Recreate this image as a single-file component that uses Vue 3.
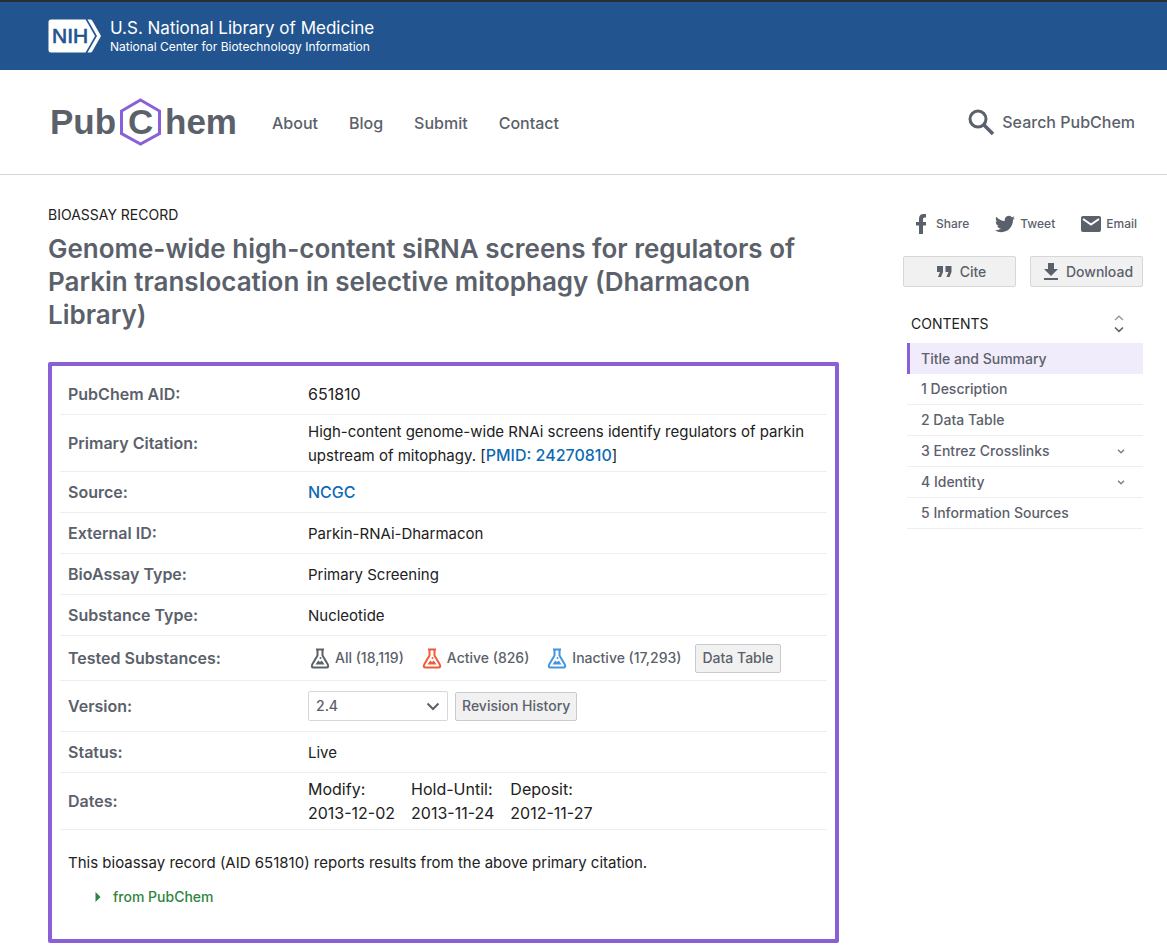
<script setup>
import { ref } from 'vue'

const navLinks = ['About', 'Blog', 'Submit', 'Contact']
const version = ref('2.4')
const topRows = [
  { label: 'External ID:', value: 'Parkin-RNAi-Dharmacon' },
  { label: 'BioAssay Type:', value: 'Primary Screening' },
  { label: 'Substance Type:', value: 'Nucleotide' },
]
const substances = [
  { text: 'All (18,119)', tone: 'all' },
  { text: 'Active (826)', tone: 'active' },
  { text: 'Inactive (17,293)', tone: 'inactive' },
]
const dates = [
  { label: 'Modify:', value: '2013-12-02' },
  { label: 'Hold-Until:', value: '2013-11-24' },
  { label: 'Deposit:', value: '2012-11-27' },
]
const contents = [
  { text: 'Title and Summary', current: true },
  { text: '1 Description' },
  { text: '2 Data Table' },
  { text: '3 Entrez Crosslinks', expandable: true },
  { text: '4 Identity', expandable: true },
  { text: '5 Information Sources' },
]
</script>

<template>
  <div class="page">
    <div class="agency">
      <a href="#" class="agency-link">
        <svg class="nih" width="54" height="34" viewBox="0 0 54 34" aria-hidden="true">
          <path d="M3 .5H37.600L47 17 37.600 33.500H3Q.5 33.500 .5 31V3Q.5 .5 3 .5Z" fill="#fff" />
          <path d="M39.500 .5H42.500Q43.500 .5 44.200 1.600L53 17 44.200 32.400Q43.500 33.500 42.500 33.500H39.500L49 17Z" fill="#fff" />
          <text x="4" y="24" class="nih-text">NIH</text>
        </svg>
        <span class="agency-names">
          <span class="agency-main">U.S. National Library of Medicine</span>
          <span class="agency-sub">National Center for Biotechnology Information</span>
        </span>
      </a>
    </div>

    <header class="header">
      <a href="#" class="logo" aria-label="PubChem">
        <svg width="188" height="48" viewBox="0 0 188 48">
          <text x="1" y="36" class="logo-text">Pub</text>
          <text x="79" y="36" class="logo-text">C</text>
          <text x="116" y="36" class="logo-text">hem</text>
          <path d="M91.500 2 110.500 13V35.500L91.500 46 72.500 35.500V13Z" fill="none" stroke="#8b60d6" stroke-width="3" />
        </svg>
      </a>
      <nav class="nav">
        <a v-for="l in navLinks" :key="l" href="#">{{ l }}</a>
      </nav>
      <a href="#" class="search">
        <svg width="27" height="27" viewBox="0 0 27 27" aria-hidden="true">
          <circle cx="10" cy="10" r="8" fill="none" stroke="currentColor" stroke-width="3" />
          <path d="M15.500 15.500 25 25" stroke="currentColor" stroke-width="3.600" />
        </svg>
        Search PubChem
      </a>
    </header>

    <div class="body">
      <main class="main">
        <p class="kind">BIOASSAY RECORD</p>
        <h1>Genome-wide high-content siRNA screens for regulators of Parkin translocation in selective mitophagy (Dharmacon Library)</h1>

        <section class="summary">
          <table>
            <tbody>
              <tr><th scope="row">PubChem AID:</th><td class="numeric">651810</td></tr>
              <tr>
                <th scope="row">Primary Citation:</th>
                <td>High-content genome-wide RNAi screens identify regulators of parkin upstream of mitophagy. [<a href="#">PMID: 24270810</a>]</td>
              </tr>
              <tr><th scope="row">Source:</th><td><a href="#">NCGC</a></td></tr>
              <tr v-for="r in topRows" :key="r.label"><th scope="row">{{ r.label }}</th><td>{{ r.value }}</td></tr>
              <tr class="row-tested">
                <th scope="row">Tested Substances:</th>
                <td>
                  <div class="substances">
                    <a v-for="s in substances" :key="s.tone" href="#" class="substance">
                      <svg :class="s.tone" width="20" height="22" viewBox="0 0 20 22" aria-hidden="true">
                        <path d="M6 2.500H14" stroke="currentColor" stroke-width="2" />
                        <path d="M7.500 3V8.500L2.200 17.500Q1 20.500 3.500 20.500H16.500Q19 20.500 17.800 17.500L12.500 8.500V3" fill="none" stroke="currentColor" stroke-width="2" stroke-linejoin="round" />
                        <path d="M5.500 17.500 8.200 13.500 10 15 11.800 13.500 14.500 17.500Z" fill="currentColor" />
                        <circle cx="10.500" cy="11" r="1" fill="currentColor" />
                      </svg>
                      {{ s.text }}
                    </a>
                    <button type="button" class="btn">Data Table</button>
                  </div>
                </td>
              </tr>
              <tr class="row-version">
                <th scope="row"><label for="version">Version:</label></th>
                <td>
                  <div class="version">
                    <span class="select">
                      <select id="version" v-model="version"><option>2.4</option></select>
                      <svg width="14" height="9" viewBox="0 0 14 9" aria-hidden="true"><path d="M1.500 1.500 7 7 12.500 1.500" fill="none" stroke="currentColor" stroke-width="2" /></svg>
                    </span>
                    <button type="button" class="btn">Revision History</button>
                  </div>
                </td>
              </tr>
              <tr><th scope="row">Status:</th><td>Live</td></tr>
              <tr>
                <th scope="row">Dates:</th>
                <td class="numeric">
                  <ul class="dates">
                    <li v-for="d in dates" :key="d.label"><span>{{ d.label }}</span><span>{{ d.value }}</span></li>
                  </ul>
                </td>
              </tr>
            </tbody>
          </table>
          <p class="note">This bioassay record (AID 651810) reports results from the above primary citation.</p>
          <a href="#" class="origin">
            <svg width="6" height="10" viewBox="0 0 6 10" aria-hidden="true"><path d="M.5 0 5.500 5 .5 10Z" fill="currentColor" /></svg>
            from PubChem
          </a>
        </section>
      </main>

      <aside class="side">
        <div class="share">
          <a href="#">
            <svg width="20" height="20" viewBox="0 0 20 20" aria-hidden="true"><path d="M8 20V11.500H5V8H8V5Q8 0 12.500 0H15V3.500H13.500Q12 3.500 12 5V8H15V11.500H12V20Z" fill="currentColor" /></svg>
            Share
          </a>
          <a href="#">
            <svg width="20" height="18" viewBox="0 2 24 20" aria-hidden="true"><path d="M23.950 4.570a10 10 0 0 1-2.820.77 4.960 4.960 0 0 0 2.160-2.720c-.95.550-2 .95-3.130 1.180a4.920 4.920 0 0 0-8.380 4.480C7.690 8.090 4.070 6.130 1.640 3.160a4.820 4.820 0 0 0-.67 2.480c0 1.700.87 3.210 2.190 4.090a4.900 4.900 0 0 1-2.230-.61v.06a4.920 4.920 0 0 0 3.950 4.830 5 5 0 0 1-2.210.08 4.940 4.940 0 0 0 4.600 3.420A9.870 9.870 0 0 1 0 19.540a13.990 13.990 0 0 0 7.560 2.210c9.050 0 14-7.500 14-13.980 0-.21 0-.42-.02-.63a9.940 9.940 0 0 0 2.410-2.570Z" fill="currentColor" /></svg>
            Tweet
          </a>
          <a href="#">
            <svg width="20" height="16" viewBox="0 0 20 16" aria-hidden="true"><rect width="20" height="16" rx="2" fill="currentColor" /><path d="M2 3 10 8.500 18 3" fill="none" stroke="#fff" stroke-width="2" /></svg>
            Email
          </a>
        </div>
        <div class="actions">
          <button type="button">
            <svg width="15" height="11" viewBox="0 0 15 11" aria-hidden="true"><path d="M0 0H6V6L4 11H1L3 6H0ZM8.500 0H14.500V6L12.500 11H9.500L11.500 6H8.500Z" fill="currentColor" /></svg>
            Cite
          </button>
          <button type="button">
            <svg width="14" height="17" viewBox="0 0 14 17" aria-hidden="true"><path d="M4 0H10V6H14L7 13 0 6H4ZM0 15H14V17H0Z" fill="currentColor" /></svg>
            Download
          </button>
        </div>
        <div class="contents-head">
          <h2>CONTENTS</h2>
          <button type="button" aria-label="Expand or collapse contents">
            <svg width="10" height="18" viewBox="0 0 10 18" aria-hidden="true">
              <path d="M1 5 5 1.200 9 5" fill="none" stroke="#8f949b" stroke-width="1.200" />
              <path d="M1 12.500 5 16.300 9 12.500" fill="none" stroke="currentColor" stroke-width="1.600" />
            </svg>
          </button>
        </div>
        <ul class="contents">
          <li v-for="c in contents" :key="c.text" :class="{ current: c.current }">
            <a href="#">{{ c.text }}</a>
            <button v-if="c.expandable" type="button" :aria-label="'Expand ' + c.text">
              <svg width="8" height="5" viewBox="0 0 8 5" aria-hidden="true"><path d="M1 .800 4 3.800 7 .800" fill="none" stroke="#7d828a" stroke-width="1.500" /></svg>
            </button>
          </li>
        </ul>
      </aside>
    </div>
  </div>
</template>

<style>
body {
  margin: 0;
  background: #fff;
}
</style>

<style scoped>
.page {
  font-family: Inter, "Liberation Sans", sans-serif;
  font-size: 15px;
  line-height: 24px;
  color: #212121;
}
ul, p, h1, h2 { margin: 0; padding: 0; list-style: none; }
a { color: inherit; text-decoration: none; }
button, select { font: inherit; color: inherit; cursor: pointer; }
svg { display: block; flex: none; }

.agency {
  background: #22558f;
  border-top: 2px solid #2a2e33;
  height: 68px;
  display: flex;
  align-items: center;
  padding: 0 48px;
}
.agency-link { display: flex; align-items: center; gap: 8px; color: #fff; }
.nih-text { font: 21px "Liberation Sans", sans-serif; fill: #22558f; stroke: #22558f; stroke-width: 0.7px; }
.agency-names { display: flex; flex-direction: column; }
.agency-main { font-size: 17px; line-height: 22px; }
.agency-sub { font-size: 12px; line-height: 16px; }

.header {
  display: flex;
  align-items: center;
  height: 104px;
  padding: 0 32px 0 49px;
  border-bottom: 1px solid #d6d7d9;
  color: #5b616b;
  font-size: 16px;
  font-weight: 500;
}
.logo-text { font: bold 35px "Liberation Sans", sans-serif; fill: #5b616b; }
.nav { display: flex; gap: 31px; margin-left: 35px; padding-top: 2px; }
.search { display: flex; align-items: center; gap: 7px; margin-left: auto; }

.body {
  display: flex;
  align-items: flex-start;
  gap: 64px;
  padding: 28px 24px 8px 48px;
}
.main { flex: 1; min-width: 0; }
.kind { font-size: 14px; }
h1 {
  font-size: 26px;
  line-height: 33px;
  font-weight: 600;
  color: #5b616b;
  padding-top: 5px;
}
.summary {
  margin-top: 31px;
  border: 4px solid #8b60d6;
  border-radius: 2px;
  padding: 8px 8px 30px;
}
table { width: 100%; border-collapse: separate; border-spacing: 0; }
th, td {
  height: 32px;
  padding: 4px 8px;
  border-bottom: 1px solid #eeeef0;
  text-align: left;
  vertical-align: middle;
}
th { width: 224px; font-size: 16px; font-weight: 600; color: #5b616b; }
td { padding: 5px 8px 3px; }
td a { color: #0d6bb5; font-size: 16px; line-height: 16px; font-weight: 500; }
td.numeric { padding: 4px 8px; font-size: 16px; }
td .substance, .btn { color: #5b616b; font-size: 14px; font-weight: 500; }
.row-tested td, .row-tested th { height: 36px; }
.row-version td, .row-version th { height: 42px; }
.row-tested td, .row-version td { padding: 4px 8px; }
.substances { display: flex; align-items: center; gap: 18px; padding-left: 2px; }
.substance { display: flex; align-items: center; gap: 5px; }
.all { color: #5b616b; }
.active { color: #f15a38; }
.inactive { color: #4295de; }
.btn {
  height: 29px;
  padding: 0 6px;
  border: 1px solid #c9cacd;
  border-radius: 2px;
  background: #f1f1f1;
}
.substances .btn { margin-left: -4px; }
.version { display: flex; align-items: center; gap: 7px; }
.select { position: relative; color: #5b616b; }
.select select {
  display: block;
  width: 140px;
  height: 30px;
  padding: 0 7px;
  appearance: none;
  border: 1px solid #d6d7d9;
  border-radius: 2px;
  background: #fff;
  font-size: 14px;
  font-weight: 500;
}
.select svg { position: absolute; right: 8px; top: 11px; pointer-events: none; }
.dates { display: flex; gap: 16px; }
.dates li { display: flex; flex-direction: column; }
.note { padding: 21px 8px 0; }
.origin {
  display: flex;
  align-items: center;
  gap: 12px;
  margin: 10px 0 0 35px;
  font-size: 14px;
  font-weight: 500;
  color: #2e8540;
}

.side { width: 240px; flex: none; color: #5b616b; padding-top: 9px; }
.share { display: flex; justify-content: space-between; padding: 0 6px 0 8px; font-size: 12px; font-weight: 500; }
.share a { display: flex; align-items: center; gap: 5px; }
.actions { display: grid; grid-template-columns: 1fr 1fr; gap: 14px; margin-top: 20px; }
.actions button {
  display: flex;
  align-items: center;
  justify-content: center;
  gap: 8px;
  height: 31px;
  padding: 0 0 0 4px;
  border: 1px solid #d6d7d9;
  border-radius: 2px;
  background: #f1f1f1;
  font-size: 14px;
  font-weight: 500;
}
.contents-head { display: flex; align-items: center; justify-content: space-between; padding: 25px 19px 7px 8px; }
.contents-head h2 { font-size: 14px; font-weight: 400; color: #212121; }
.contents-head button, .contents button { border: 0; padding: 0; background: none; }
.contents { margin-left: 4px; font-size: 14px; font-weight: 500; }
.contents li {
  display: flex;
  align-items: center;
  justify-content: space-between;
  height: 30px;
  padding: 0 18px 0 14px;
  border-bottom: 1px solid #eeeef0;
}
.contents .current { height: 31px; padding-left: 11px; background: #f1ecfb; border-left: 3px solid #8b60d6; border-bottom: 0; }
</style>
